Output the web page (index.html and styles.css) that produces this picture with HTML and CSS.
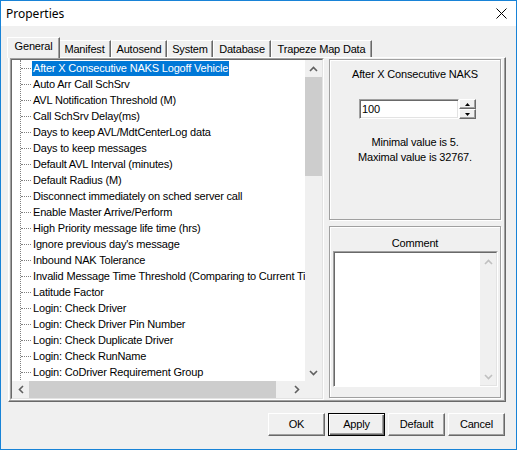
FILE: index.html
```html
<!DOCTYPE html>
<html>
<head>
<meta charset="utf-8">
<title>Properties</title>
<link rel="stylesheet" href="styles.css">
</head>
<body>
<div class="window">
  <div class="titlebar">
    <span class="title">Properties</span>
    <svg class="close" width="11" height="11" viewBox="0 0 11 11"><path d="M0.5 0.5L10.5 10.5M10.5 0.5L0.5 10.5" stroke="#000" stroke-width="1" fill="none"/></svg>
  </div>
  <div class="client">
    <div class="tabs">
      <div class="tab active w-general">General</div>
      <div class="tab w-manifest">Manifest</div>
      <div class="tab w-autosend">Autosend</div>
      <div class="tab w-system">System</div>
      <div class="tab w-database">Database</div>
      <div class="tab w-trapeze">Trapeze Map Data</div>
    </div>
    <div class="panel">
      <div class="tree-outer">
        <div class="tree-inner">
          <div class="tree-view">
            <ul class="tree-list">
              <li><span class="label sel">After X Consecutive NAKS Logoff Vehicle</span></li>
              <li><span class="label">Auto Arr Call SchSrv</span></li>
              <li><span class="label">AVL Notification Threshold (M)</span></li>
              <li><span class="label">Call SchSrv Delay(ms)</span></li>
              <li><span class="label">Days to keep AVL/MdtCenterLog data</span></li>
              <li><span class="label">Days to keep messages</span></li>
              <li><span class="label">Default AVL Interval (minutes)</span></li>
              <li><span class="label">Default Radius (M)</span></li>
              <li><span class="label">Disconnect immediately on sched server call</span></li>
              <li><span class="label">Enable Master Arrive/Perform</span></li>
              <li><span class="label">High Priority message life time (hrs)</span></li>
              <li><span class="label">Ignore previous day's message</span></li>
              <li><span class="label">Inbound NAK Tolerance</span></li>
              <li><span class="label">Invalid Message Time Threshold (Comparing to Current Time)</span></li>
              <li><span class="label">Latitude Factor</span></li>
              <li><span class="label">Login: Check Driver</span></li>
              <li><span class="label">Login: Check Driver Pin Number</span></li>
              <li><span class="label">Login: Check Duplicate Driver</span></li>
              <li><span class="label">Login: Check RunName</span></li>
              <li><span class="label">Login: CoDriver Requirement Group</span></li>
            </ul>
          </div>
          <div class="vscroll">
            <div class="sb-btn"><svg width="9" height="6" viewBox="0 0 9 6"><path d="M1 5L4.5 1.5L8 5" stroke="#606060" stroke-width="1.6" fill="none"/></svg></div>
            <div class="v-thumb"></div>
            <div class="v-track"></div>
            <div class="sb-btn"><svg width="9" height="6" viewBox="0 0 9 6"><path d="M1 1L4.5 4.5L8 1" stroke="#606060" stroke-width="1.6" fill="none"/></svg></div>
          </div>
          <div class="hscroll">
            <div class="sb-btn"><svg width="6" height="9" viewBox="0 0 6 9"><path d="M5 1L1.5 4.5L5 8" stroke="#606060" stroke-width="1.6" fill="none"/></svg></div>
            <div class="h-thumb"></div>
            <div class="h-track"></div>
            <div class="sb-btn"><svg width="6" height="9" viewBox="0 0 6 9"><path d="M1 1L4.5 4.5L1 8" stroke="#606060" stroke-width="1.6" fill="none"/></svg></div>
          </div>
          <div class="corner"></div>
        </div>
      </div>
      <div class="side">
        <div class="group g1">
          <div class="g-title">After X Consecutive NAKS</div>
          <div class="spin">
            <div class="spin-input">100</div>
            <div class="spin-btns">
              <div class="spin-btn"><svg width="5" height="3" viewBox="0 0 5 3"><path d="M2.5 0L5 3H0Z" fill="#000"/></svg></div>
              <div class="spin-btn"><svg width="5" height="3" viewBox="0 0 5 3"><path d="M0 0H5L2.5 3Z" fill="#000"/></svg></div>
            </div>
          </div>
          <div class="limits">Minimal value is 5.<br>Maximal value is 32767.</div>
        </div>
        <div class="group g2">
          <div class="g-title c-title">Comment</div>
          <div class="memo">
            <div class="memo-text"></div>
            <div class="memo-scroll">
              <svg width="9" height="6" viewBox="0 0 9 6"><path d="M1 5L4.5 1.5L8 5" stroke="#c0c0c0" stroke-width="1.6" fill="none"/></svg>
              <svg width="9" height="6" viewBox="0 0 9 6"><path d="M1 1L4.5 4.5L8 1" stroke="#c0c0c0" stroke-width="1.6" fill="none"/></svg>
            </div>
          </div>
        </div>
      </div>
    </div>
    <div class="buttons">
      <div class="btn">OK</div>
      <div class="btn default">Apply</div>
      <div class="btn">Default</div>
      <div class="btn">Cancel</div>
    </div>
  </div>
</div>
</body>
</html>
```

FILE: styles.css
```css
* { box-sizing: border-box; }
html, body { margin: 0; padding: 0; }
body {
  width: 517px;
  height: 450px;
  overflow: hidden;
  font-family: "Liberation Sans", Arial, sans-serif;
  font-size: 11px;
  letter-spacing: -0.18px;
  color: #000;
  background: #fff;
}
.window {
  width: 517px;
  height: 450px;
  border: 1px solid #1883d7;
  display: flex;
  flex-direction: column;
  background: #f0f0f0;
}
.titlebar {
  height: 25px;
  flex: none;
  background: #fff;
  display: flex;
  align-items: center;
  justify-content: space-between;
  padding: 0 9px 0 5px;
}
.title {
  font-family: "Noto Sans", "Liberation Sans", sans-serif;
  font-size: 12px;
  letter-spacing: 0;
}
.close { display: block; }
.client {
  flex: 1;
  display: flex;
  flex-direction: column;
}
.tabs {
  display: flex;
  align-items: flex-end;
  height: 20px;
  margin-top: 11px;
  padding-left: 6px;
  position: relative;
  z-index: 1;
}
.tab {
  height: 17px;
  padding-top: 2px;
  line-height: 13px;
  text-align: center;
  white-space: nowrap;
  border-top: 1px solid #fff;
  border-left: 1px solid #fff;
  border-right: 1px solid #696969;
  box-shadow: inset -1px 0 0 #a0a0a0;
  background: #f0f0f0;
  flex: none;
}
.tab.active {
  height: 21px;
  margin-bottom: -1px;
  padding-top: 2px;
  position: relative;
  z-index: 2;
}
.w-general { width: 53px; }
.w-manifest { width: 53px; margin-left: -2px; }
.w-autosend { width: 56px; }
.w-system { width: 46px; }
.w-database { width: 58px; }
.w-trapeze { width: 101px; }

.panel {
  margin-left: 7px;
  width: 498px;
  height: 345px;
  flex: none;
  border: 1px solid;
  border-color: #fff #696969 #696969 #fff;
  box-shadow: inset -1px -1px 0 #a0a0a0;
  display: flex;
  padding: 0 4px 0 1px;
}
.tree-outer {
  width: 314px;
  height: 342px;
  flex: none;
  border: 1px solid;
  border-color: #a0a0a0 #fff #fff #a0a0a0;
}
.tree-inner {
  width: 312px;
  height: 340px;
  border: 1px solid;
  border-color: #696969 #e3e3e3 #e3e3e3 #696969;
  display: grid;
  grid-template-columns: 293px 17px;
  grid-template-rows: 321px 17px;
  background: #fff;
}
.tree-view {
  overflow: hidden;
  background: #fff;
}
.tree-list {
  list-style: none;
  margin: 0 0 0 8px;
  padding: 0 0 8px;
  border-left: 1px dotted #808080;
}
.tree-list li {
  display: flex;
  align-items: center;
  height: 16px;
}
.tree-list li::before {
  content: "";
  flex: none;
  width: 10px;
  border-top: 1px dotted #808080;
}
.label {
  flex: none;
  white-space: nowrap;
  margin-left: 1px;
  padding: 0 1px;
  height: 15px;
  line-height: 15px;
}
.label.sel {
  background: #0078d7;
  color: #fff;
}
.vscroll {
  background: #f0f0f0;
  display: flex;
  flex-direction: column;
}
.hscroll {
  background: #f0f0f0;
  display: flex;
}
.sb-btn {
  width: 17px;
  height: 17px;
  flex: none;
  display: flex;
  align-items: center;
  justify-content: center;
}
.v-thumb {
  height: 99px;
  flex: none;
  background: #cdcdcd;
}
.v-track { flex: 1; }
.h-thumb {
  width: 247px;
  flex: none;
  background: #cdcdcd;
}
.h-track { flex: 1; }
.corner { background: #f0f0f0; }

.side {
  margin-left: 5px;
  padding-top: 1px;
  display: flex;
  flex-direction: column;
}
.group {
  width: 172px;
  border: 1px solid #a0a0a0;
  box-shadow: inset 1px 1px 0 #fff, 1px 1px 0 #fff;
  text-align: center;
}
.g1 { height: 161px; }
.g2 { height: 172px; margin-top: 6px; }
.g-title {
  padding-top: 8px;
  line-height: 13px;
}
.c-title { padding-top: 10px; }
.spin {
  display: flex;
  margin: 18px 0 0 29px;
}
.spin-input {
  width: 100px;
  height: 20px;
  border: 1px solid;
  border-color: #a0a0a0 #fff #fff #a0a0a0;
  box-shadow: inset 1px 1px 0 #696969, inset -1px -1px 0 #e3e3e3;
  background: #fff;
  text-align: left;
  padding-left: 2px;
  line-height: 18px;
}
.spin-btns {
  display: flex;
  flex-direction: column;
}
.spin-btn {
  width: 17px;
  height: 10px;
  border: 1px solid;
  border-color: #fff #696969 #696969 #fff;
  box-shadow: inset -1px -1px 0 #a0a0a0;
  background: #f0f0f0;
  display: flex;
  align-items: center;
  justify-content: center;
}
.spin-btn svg { display: block; }
.limits {
  margin-top: 16px;
  line-height: 15px;
}
.memo {
  margin: 1px 0 0 3px;
  width: 165px;
  height: 136px;
  border: 1px solid;
  border-color: #a0a0a0 #fff #fff #a0a0a0;
  display: flex;
}
.memo-text {
  flex: 1;
  background: #fff;
  border-top: 1px solid #696969;
  border-left: 1px solid #696969;
}
.memo-scroll {
  width: 17px;
  background: #f0f0f0;
  border-top: 1px solid #696969;
  border-right: 1px solid #e3e3e3;
  border-bottom: 1px solid #e3e3e3;
  display: flex;
  flex-direction: column;
  align-items: center;
  justify-content: space-between;
  padding: 6px 0 5px;
}
.buttons {
  display: flex;
  justify-content: flex-end;
  gap: 3px;
  margin-top: 11px;
  padding-right: 11px;
}
.btn {
  width: 57px;
  height: 23px;
  border: 1px solid;
  border-color: #fff #696969 #696969 #fff;
  box-shadow: inset -1px -1px 0 #a0a0a0;
  background: #f0f0f0;
  text-align: center;
  line-height: 21px;
}
.btn.default {
  border-color: #000;
  box-shadow: inset 1px 1px 0 #fff, inset -1px -1px 0 #696969, inset -2px -2px 0 #a0a0a0;
}
```
